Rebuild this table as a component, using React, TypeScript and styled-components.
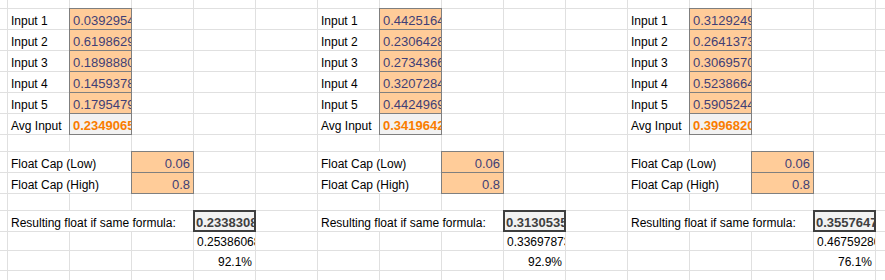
import * as React from 'react'
import styled, { createGlobalStyle, css } from 'styled-components'

type Kind = 'plain' | 'input' | 'calc' | 'output'

interface CellSpec {
    text?: string
    kind?: Kind
    right?: boolean
    span?: number
}

interface Block {
    inputs: string[]
    avg: string
    low: string
    high: string
    result: string
    raw: string
    pct: string
}

const blocks: Block[] = [
    {
        inputs: ['0.03929541', '0.61986293', '0.18988806', '0.14593782', '0.17954792'],
        avg: '0.23490652',
        low: '0.06',
        high: '0.8',
        result: '0.23383082',
        raw: '0.25386068',
        pct: '92.1%',
    },
    {
        inputs: ['0.44251644', '0.23064281', '0.27343660', '0.32072841', '0.44249693'],
        avg: '0.34196421',
        low: '0.06',
        high: '0.8',
        result: '0.31305351',
        raw: '0.33697873',
        pct: '92.9%',
    },
    {
        inputs: ['0.31292491', '0.26413732', '0.30695701', '0.52386641', '0.59052441'],
        avg: '0.39968201',
        low: '0.06',
        high: '0.8',
        result: '0.35576472',
        raw: '0.46759280',
        pct: '76.1%',
    },
]

// each block takes five sheet columns; one sliver column before, one after
const COLS_PER_BLOCK = 5
const ROW_HEIGHTS = [8, 20, 20, 20, 20, 20, 20, 16, 20, 20, 16, 20, 18, 19, 20]

const blank = (n: number): CellSpec[] => Array.from({ length: n }, () => ({}))

const blockRow = (b: Block, row: number): CellSpec[] => {
    if (row >= 1 && row <= 5) {
        return [{ text: `Input ${row}` }, { text: b.inputs[row - 1], kind: 'input' }, ...blank(3)]
    }
    switch (row) {
        case 6:
            return [{ text: 'Avg Input' }, { text: b.avg, kind: 'calc' }, ...blank(3)]
        case 8:
            return [{ text: 'Float Cap (Low)', span: 2 }, { text: b.low, kind: 'input', right: true }, ...blank(2)]
        case 9:
            return [{ text: 'Float Cap (High)', span: 2 }, { text: b.high, kind: 'input', right: true }, ...blank(2)]
        case 11:
            return [{ text: 'Resulting float if same formula:', span: 3 }, { text: b.result, kind: 'output' }, ...blank(1)]
        case 12:
            return [...blank(3), { text: b.raw }, ...blank(1)]
        case 13:
            return [...blank(3), { text: b.pct, right: true }, ...blank(1)]
        default:
            return blank(COLS_PER_BLOCK)
    }
}

const sheetRows: CellSpec[][] = ROW_HEIGHTS.map((_, r) => [
    {},
    ...blocks.flatMap((b) => blockRow(b, r)),
    {},
])

export default function App() {
    return (
        <>
            <GlobalStyle />
            <Viewport>
                <Grid>
                    {sheetRows.map((row, r) =>
                        row.map((cell, c) => (
                            <Cell key={`${r}-${c}`} $kind={cell.kind ?? 'plain'} $right={!!cell.right} $span={cell.span ?? 1}>
                                {cell.text}
                            </Cell>
                        ))
                    )}
                </Grid>
            </Viewport>
        </>
    )
}

const GlobalStyle = createGlobalStyle`
    html, body {
        margin: 0;
        padding: 0;
        background: #ffffff;
    }
    body {
        font-family: "Liberation Sans", Arial, sans-serif;
        overflow: hidden;
    }
`

const Viewport = styled.div`
    width: 885px;
    height: 280px;
    overflow: hidden;
    background: #ffffff;
`

const Grid = styled.div`
    display: grid;
    grid-template-columns: 7px repeat(${3 * COLS_PER_BLOCK + 1}, 61px);
    grid-template-rows: ${ROW_HEIGHTS.map((h) => `${h}px`).join(' ')};
    gap: 1px;
    width: max-content;
    background: #e0e0e0;
`

interface CellProps {
    $kind: Kind
    $right: boolean
    $span: number
}

const Cell = styled.div<CellProps>`
    grid-column: span ${({ $span }) => $span};
    display: flex;
    align-items: flex-end;
    justify-content: ${({ $right }) => ($right ? 'flex-end' : 'flex-start')};
    min-width: 0;
    overflow: hidden;
    white-space: nowrap;
    padding: 0 3px 1px 3px;
    background: #ffffff;
    color: #000000;
    font-size: 12px;
    line-height: 14px;
    ${({ $kind }) => {
        switch ($kind) {
            case 'input':
                return css`
                    background: #ffcc99;
                    color: #3f3f76;
                    font-size: 13px;
                    line-height: 15px;
                    box-shadow: 0 0 0 1px #7f7f7f;
                `
            case 'calc':
                return css`
                    background: #f2f2f2;
                    color: #fa7d00;
                    font-size: 13px;
                    line-height: 15px;
                    font-weight: bold;
                    box-shadow: 0 0 0 1px #7f7f7f;
                `
            case 'output':
                return css`
                    background: #f2f2f2;
                    color: #3f3f3f;
                    font-size: 13px;
                    line-height: 15px;
                    font-weight: bold;
                    padding-left: 2px;
                    box-shadow: 0 0 0 1px #3f3f3f, inset 0 0 0 1px #3f3f3f;
                `
            default:
                return null
        }
    }}
`
